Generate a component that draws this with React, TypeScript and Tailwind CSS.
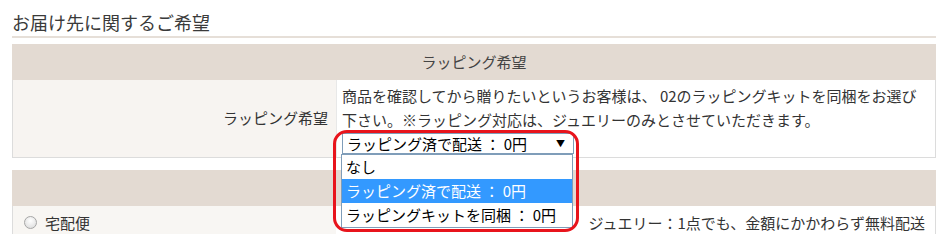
import React from "react";

export default function App() {
  return (
    <div className="relative w-[945px] h-[234px] overflow-hidden bg-white text-[#333] font-['Noto_Sans_CJK_JP','Noto_Sans_CJK_SC',sans-serif]">
      <div className="pl-[12px] pr-[9px]">
        <h2 className="text-[18px] leading-[24px] pt-[10px] pb-[2px] border-b-2 border-[#e6dfd8] font-normal text-[#3a3a3a]">
          お届け先に関するご希望
        </h2>

        <div className="mt-[6px]">
          <div className="h-[36px] bg-[#e3dad2] flex items-center justify-center text-[15px] text-[#444]">
            ラッピング希望
          </div>
          <div className="flex border-x border-b border-[#dcdcdc]">
            <div className="w-[323px] bg-[#f7f4f1] flex items-center justify-end pr-[8px] text-[15px]">
              ラッピング希望
            </div>
            <div className="flex-1 border-l border-[#e8e8e8] pl-[5px] pt-[4px] pb-[3px] text-[15px] leading-[24px]">
              <div className="whitespace-nowrap">
                商品を確認してから贈りたいというお客様は、 02のラッピングキットを同梱をお選び
              </div>
              <div className="whitespace-nowrap">
                下さい。※ラッピング対応は、ジュエリーのみとさせていただきます。
              </div>
              <div className="mt-[1px] w-[232px] h-[21px] border border-[#7f9db9] bg-white flex items-center justify-between pl-[4px] pr-[8px] text-[15px] leading-[19px] text-black">
                <span>ラッピング済で配送 ： 0円</span>
                <span className="text-[9px]">▼</span>
              </div>
            </div>
          </div>
        </div>

        <div className="mt-[12px]">
          <div className="h-[36px] bg-[#e3dad2]" />
          <div className="flex border-x border-[#dcdcdc] bg-[#f8f6f3] h-[40px]">
            <div className="flex items-start pt-[7px] pl-[11px] gap-[8px] w-[323px] text-[15px] leading-[20px]">
              <span className="mt-[3px] w-[13px] h-[13px] rounded-full border border-[#a6a6a6] bg-[radial-gradient(circle_at_50%_35%,#ffffff,#d8d8d8)]" />
              <span>宅配便</span>
            </div>
            <div className="flex-1 flex justify-end pr-[10px] pt-[7px] text-[15px] leading-[20px] bg-white whitespace-nowrap">
              ジュエリー：1点でも、金額にかかわらず無料配送
            </div>
          </div>
        </div>
      </div>

      {/* open select dropdown list */}
      <div className="absolute left-[341px] top-[154px] w-[232px] border border-[#7f9db9] bg-white text-[15px] text-black">
        <div className="h-[24px] leading-[24px] pl-[4px]">なし</div>
        <div className="h-[24px] leading-[24px] pl-[4px] bg-[#3399ff] text-white">ラッピング済で配送 ： 0円</div>
        <div className="h-[24px] leading-[24px] pl-[4px]">ラッピングキットを同梱 ： 0円</div>
      </div>

      {/* red annotation */}
      <div className="absolute left-[333px] top-[130px] w-[246px] h-[102px] border-[3px] border-[#e8141c] rounded-[14px]" />
    </div>
  );
}
